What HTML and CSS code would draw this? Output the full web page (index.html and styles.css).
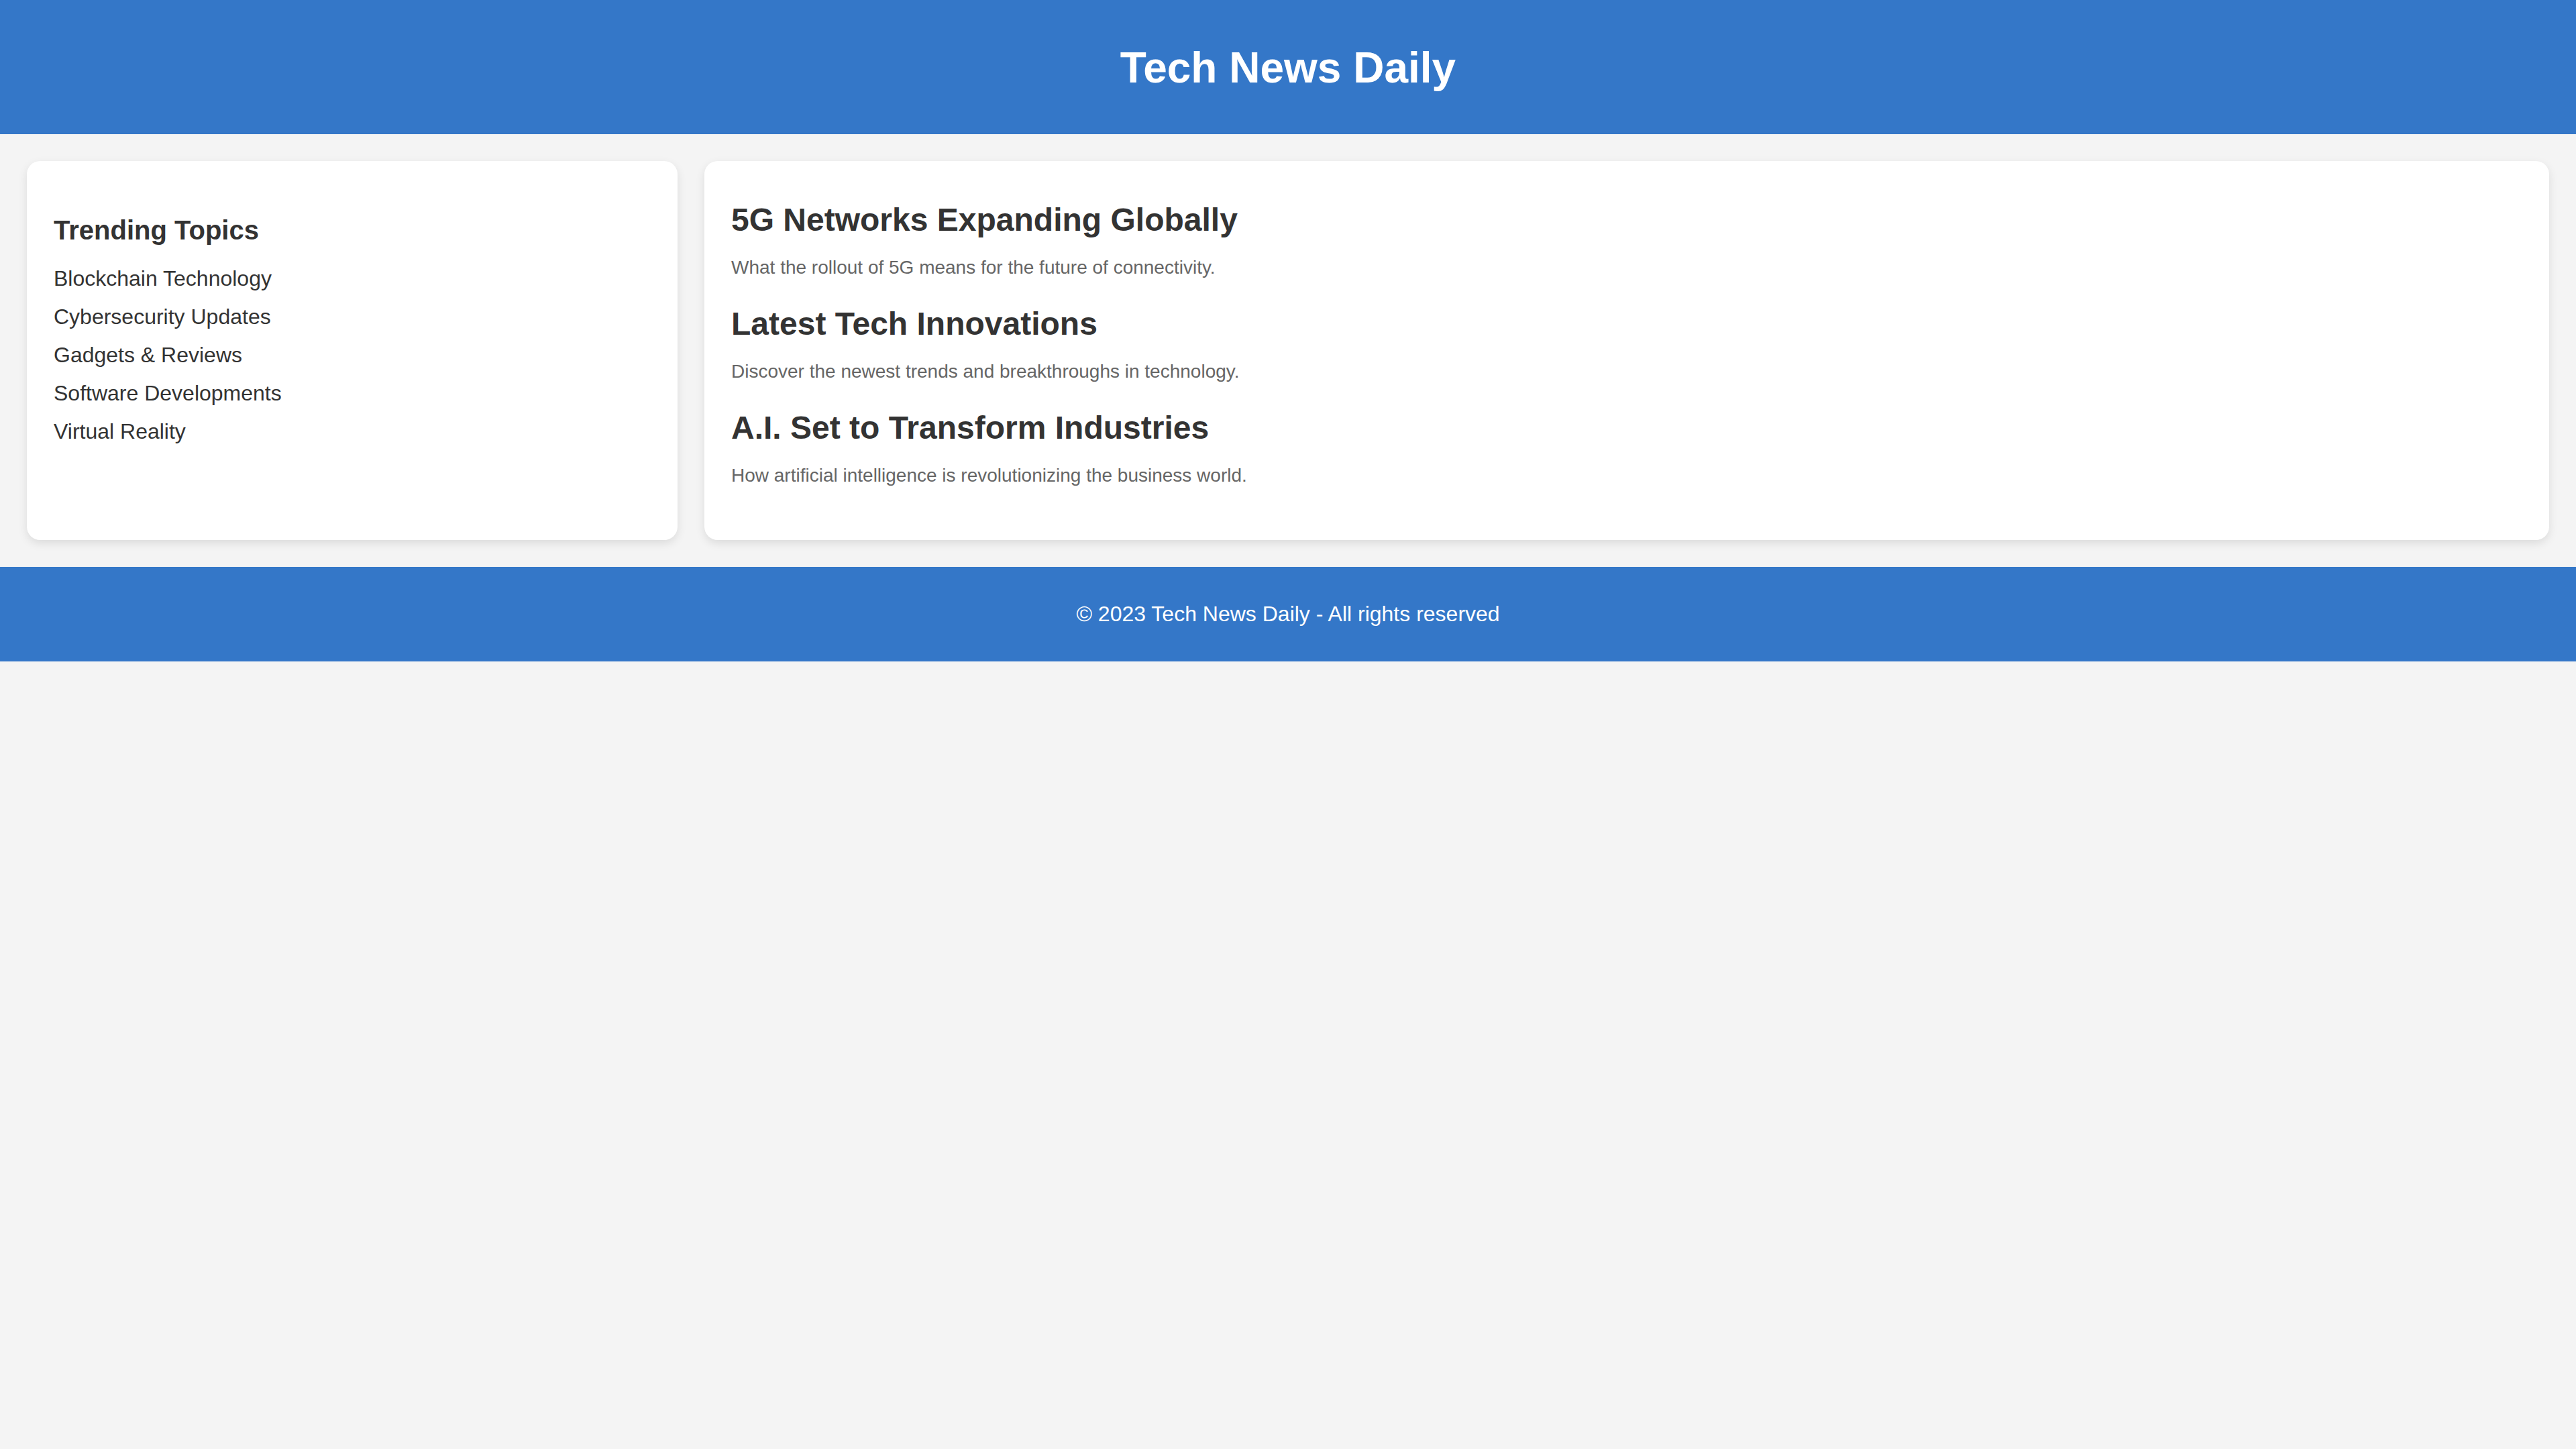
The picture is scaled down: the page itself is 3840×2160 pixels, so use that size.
FILE: index.html
```html
<!DOCTYPE html>
<html lang="en">
<head>
<meta charset="utf-8">
<title>Tech News Daily</title>
<link rel="stylesheet" href="styles.css">
</head>
<body>
<header class="site-header">
  <h1 class="site-title">Tech News Daily</h1>
</header>
<main class="layout">
  <aside class="card sidebar">
    <h3 class="sidebar-title">Trending Topics</h3>
    <ul class="topic-list">
      <li>Blockchain Technology</li>
      <li>Cybersecurity Updates</li>
      <li>Gadgets &amp; Reviews</li>
      <li>Software Developments</li>
      <li>Virtual Reality</li>
    </ul>
  </aside>
  <section class="card content">
    <article class="article">
      <h2 class="article-title">5G Networks Expanding Globally</h2>
      <p class="article-desc">What the rollout of 5G means for the future of connectivity.</p>
    </article>
    <article class="article">
      <h2 class="article-title">Latest Tech Innovations</h2>
      <p class="article-desc">Discover the newest trends and breakthroughs in technology.</p>
    </article>
    <article class="article">
      <h2 class="article-title">A.I. Set to Transform Industries</h2>
      <p class="article-desc">How artificial intelligence is revolutionizing the business world.</p>
    </article>
  </section>
</main>
<footer class="site-footer">
  <p class="footer-text">© 2023 Tech News Daily - All rights reserved</p>
</footer>
</body>
</html>
```

FILE: styles.css
```css
* {
  box-sizing: border-box;
}

html, body {
  margin: 0;
  padding: 0;
}

body {
  background: #f4f4f4;
  font-family: "Liberation Sans", Arial, Helvetica, sans-serif;
  color: #333;
}

.site-header {
  background: #3477c8;
  color: #fff;
  padding: 61px 0 59px;
  text-align: center;
}

.site-title {
  margin: 0;
  font-size: 64px;
  line-height: 80px;
  font-weight: bold;
}

.layout {
  display: flex;
  gap: 40px;
  padding: 40px;
}

.card {
  background: #fff;
  border-radius: 20px;
  padding: 40px;
  box-shadow: 0 5px 14px rgba(0, 0, 0, 0.1);
}

.sidebar {
  flex: 1;
}

.content {
  flex: 3;
}

.sidebar-title {
  font-size: 40px;
  font-weight: bold;
  margin: 41px 0 31px;
  color: #333;
}

.topic-list {
  list-style: none;
  margin: 0;
  padding: 0;
}

.topic-list li {
  font-size: 32px;
  margin-bottom: 20px;
  color: #333;
}

.article {
  margin-bottom: 40px;
}

.article-title {
  font-size: 48px;
  font-weight: bold;
  margin: 20px 0 28px;
  color: #333;
}

.article-desc {
  font-size: 28px;
  margin: 0;
  color: #666;
}

.site-footer {
  background: #3477c8;
  color: #fff;
  text-align: center;
  padding: 52px 0 52px;
}

.footer-text {
  margin: 0;
  font-size: 32px;
}
```
